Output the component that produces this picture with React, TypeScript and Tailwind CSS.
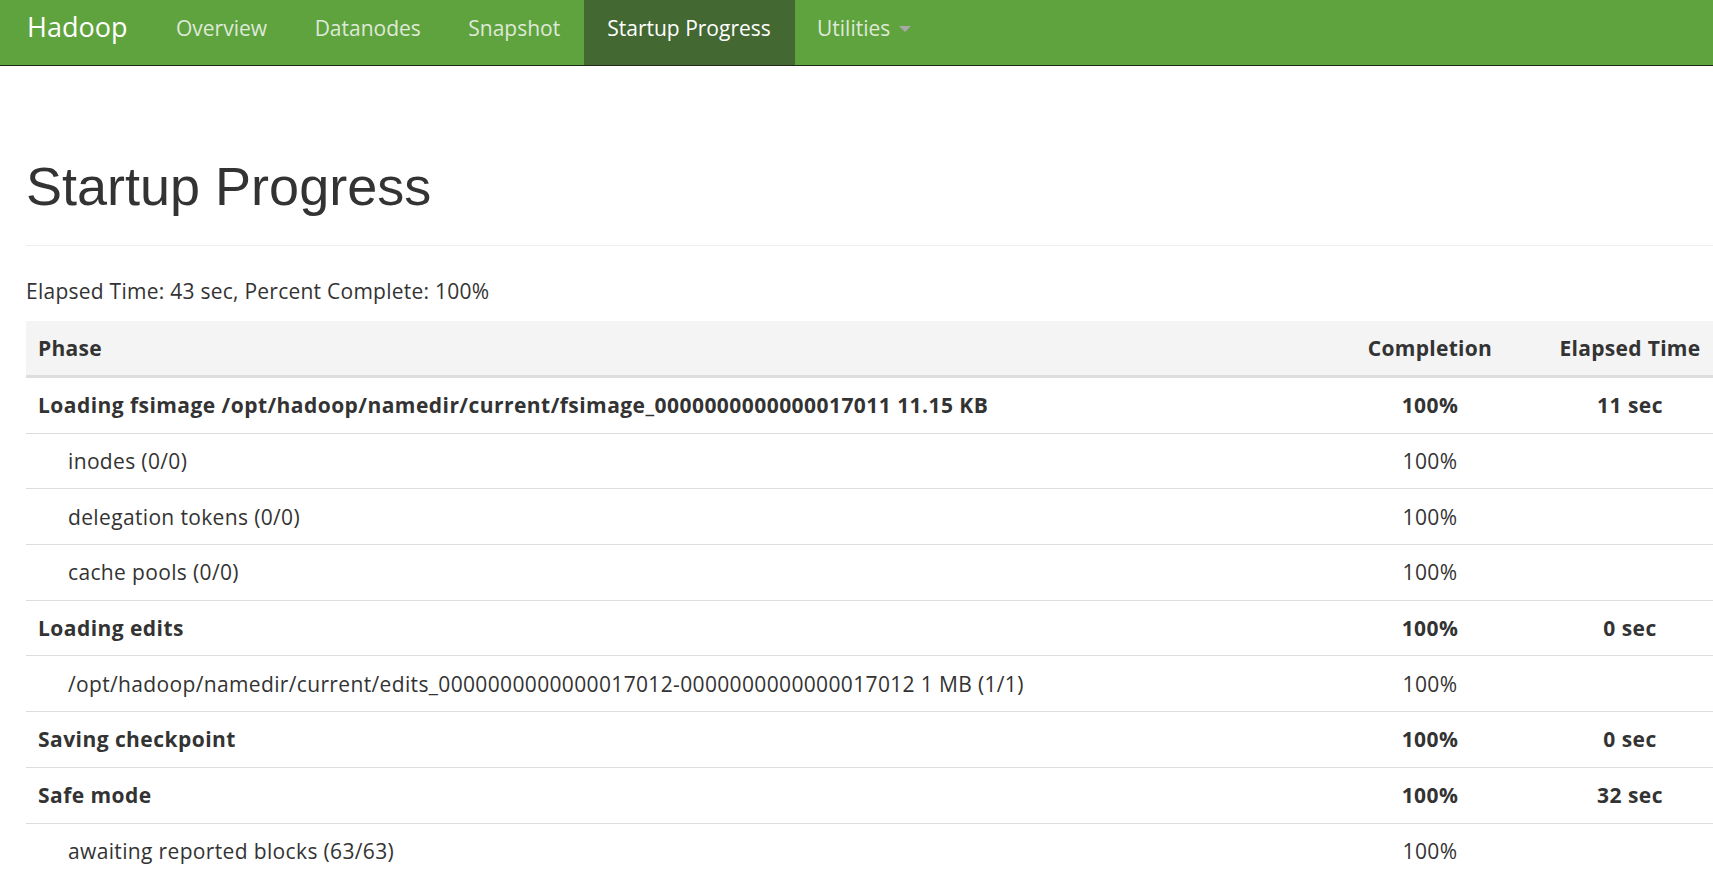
import React from "react";

type Row = { name: string; pct: string; time?: string; bold?: boolean };

const rows: Row[] = [
  { name: "Loading fsimage /opt/hadoop/namedir/current/fsimage_0000000000000017011 11.15 KB", pct: "100%", time: "11 sec", bold: true },
  { name: "inodes (0/0)", pct: "100%" },
  { name: "delegation tokens (0/0)", pct: "100%" },
  { name: "cache pools (0/0)", pct: "100%" },
  { name: "Loading edits", pct: "100%", time: "0 sec", bold: true },
  { name: "/opt/hadoop/namedir/current/edits_0000000000000017012-0000000000000017012 1 MB (1/1)", pct: "100%" },
  { name: "Saving checkpoint", pct: "100%", time: "0 sec", bold: true },
  { name: "Safe mode", pct: "100%", time: "32 sec", bold: true },
  { name: "awaiting reported blocks (63/63)", pct: "100%" },
];

export default function App() {
  const body = { fontFamily: '"Open Sans", "Noto Sans", sans-serif' };
  return (
    <div className="w-[1713px] h-[887px] overflow-hidden bg-white text-[#333]" style={body}>
      <nav className="h-[66px] bg-[#5fa33e] border-b border-[#1e2a17] flex items-stretch text-[21px]">
        <div className="ml-[4.5px] w-[148px] pl-[22.5px] pt-[12px] leading-[30px] text-[27px] text-white">Hadoop</div>
        <div className="w-[138px] text-center pt-[13px] leading-[30px] text-[#dfe9d9]">Overview</div>
        <div className="w-[154.5px] text-center pt-[13px] leading-[30px] text-[#dfe9d9]">Datanodes</div>
        <div className="w-[138.5px] text-center pt-[13px] leading-[30px] text-[#dfe9d9]">Snapshot</div>
        <div className="w-[211px] text-center pt-[13px] leading-[30px] text-white bg-[#436832]">Startup Progress</div>
        <div className="pl-[22.5px] pr-[22.5px] pt-[13px] leading-[30px] text-[#dfe9d9] flex items-start">
          <span>Utilities</span>
          <span className="ml-[9px] mt-[13px] w-0 h-0 border-l-[6px] border-r-[6px] border-t-[6px] border-l-transparent border-r-transparent border-t-[#a8a8a8]" />
        </div>
      </nav>
      <main className="pl-[26px] w-[1750px]">
        <div className="pt-[90px] pb-[29px] border-b border-[#eee]">
          <h1 className="text-[54px] leading-[60px] font-normal" style={{ fontFamily: '"Liberation Sans", Arial, sans-serif' }}>
            Startup Progress
          </h1>
        </div>
        <p className="mt-[30px] text-[21px] leading-[30px] tracking-[0.25px]">Elapsed Time: 43 sec, Percent Complete: 100%</p>
        <div className="mt-[15px] w-[1724px] text-[21px] leading-[30px]">
          <div className="flex items-center h-[57px] bg-[#f4f4f4] border-b-[3px] border-[#dddddd] font-bold tracking-[0.3px]">
            <div className="flex-1 pl-[12px]">Phase</div>
            <div className="w-[160px] text-center">Completion</div>
            <div className="w-[240px] text-center">Elapsed Time</div>
          </div>
          {rows.map((r, i) => (
            <div
              key={i}
              className={
                "flex items-center " +
                (i === 0 ? "h-[54.7px] " : "h-[55.7px] border-t border-[#dddddd] ") +
                (r.bold ? "font-bold tracking-[0.45px]" : "tracking-[0.35px]")
              }
            >
              <div className={"flex-1 whitespace-nowrap " + (r.bold ? "pl-[12px]" : "pl-[42px]")}>{r.name}</div>
              <div className="w-[160px] text-center">{r.pct}</div>
              <div className="w-[240px] text-center">{r.time ?? ""}</div>
            </div>
          ))}
        </div>
      </main>
    </div>
  );
}
